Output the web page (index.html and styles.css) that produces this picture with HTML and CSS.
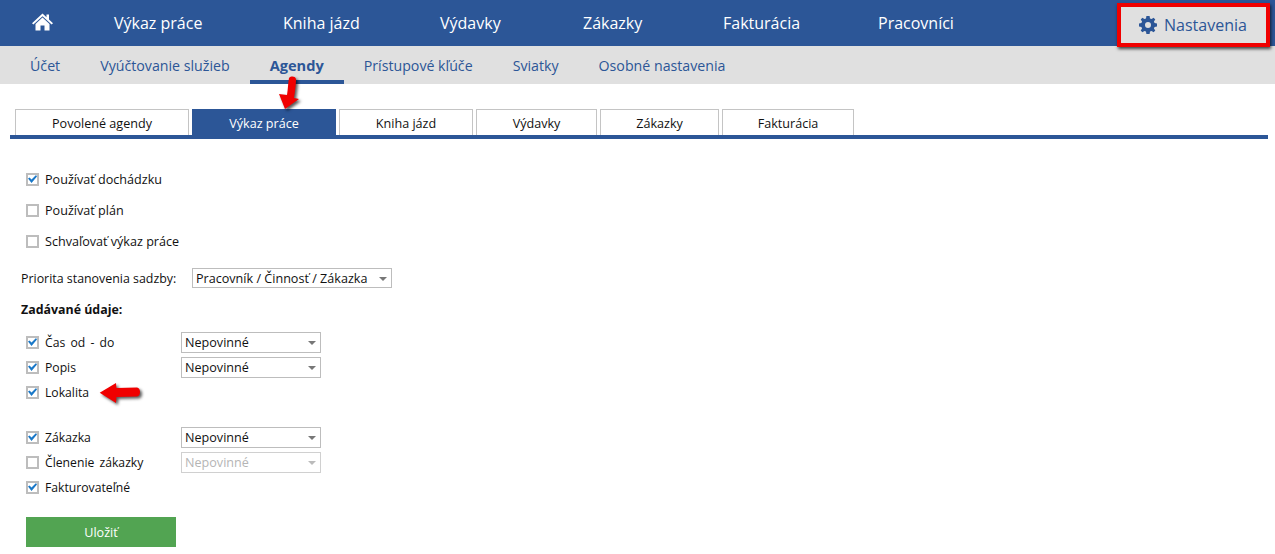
FILE: index.html
```
<!DOCTYPE html>
<html lang="sk">
<head>
<meta charset="utf-8">
<title>Nastavenia</title>
<link rel="stylesheet" href="styles.css">
</head>
<body>
<header class="topnav">
  <a class="home"><svg width="21" height="18" viewBox="0 0 21 18"><path fill="#fff" d="M10.5 0.5 L14.5 4.2 V1.6 H17 V6.5 L21 10.2 L19.6 11.6 L10.5 3.2 L1.4 11.6 L0 10.2 Z M3.5 11 L10.5 4.6 L17.5 11 V17.5 H12.5 V12.5 H8.5 V17.5 H3.5 Z"/></svg></a>
  <a class="topitem">Výkaz práce</a>
  <a class="topitem">Kniha jázd</a>
  <a class="topitem">Výdavky</a>
  <a class="topitem">Zákazky</a>
  <a class="topitem">Fakturácia</a>
  <a class="topitem">Pracovníci</a>
  <a class="settings"><svg width="18" height="18" viewBox="0 0 18 18"><path fill="#2c5697" fill-rule="evenodd" d="M7.4 0 H10.6 L11 2.4 L12.6 3.1 L14.6 1.7 L16.3 3.4 L14.9 5.4 L15.6 7 L18 7.4 V10.6 L15.6 11 L14.9 12.6 L16.3 14.6 L14.6 16.3 L12.6 14.9 L11 15.6 L10.6 18 H7.4 L7 15.6 L5.4 14.9 L3.4 16.3 L1.7 14.6 L3.1 12.6 L2.4 11 L0 10.6 V7.4 L2.4 7 L3.1 5.4 L1.7 3.4 L3.4 1.7 L5.4 3.1 L7 2.4 Z M9 6 A3 3 0 1 0 9 12 A3 3 0 1 0 9 6 Z"/></svg>Nastavenia</a>
</header>
<nav class="subnav">
  <a class="subitem">Účet</a>
  <a class="subitem">Vyúčtovanie služieb</a>
  <a class="subitem active">Agendy</a>
  <a class="subitem">Prístupové kľúče</a>
  <a class="subitem">Sviatky</a>
  <a class="subitem">Osobné nastavenia</a>
</nav>
<div class="tabs">
  <a class="tab">Povolené agendy</a>
  <a class="tab active">Výkaz práce</a>
  <a class="tab">Kniha jázd</a>
  <a class="tab">Výdavky</a>
  <a class="tab">Zákazky</a>
  <a class="tab">Fakturácia</a>
</div>
<main class="content">
  <div class="toggles">
    <label class="check"><span class="box on"></span>Používať dochádzku</label>
    <label class="check"><span class="box"></span>Používať plán</label>
    <label class="check"><span class="box"></span>Schvaľovať výkaz práce</label>
  </div>
  <div class="priority">
    <span class="prio-label">Priorita stanovenia sadzby:</span>
    <span class="select wide">Pracovník / Činnosť / Zákazka</span>
  </div>
  <h2 class="heading">Zadávané údaje:</h2>
  <div class="fields">
    <div class="field"><label class="check"><span class="box on"></span>Čas od - do</label><span class="select">Nepovinné</span></div>
    <div class="field"><label class="check"><span class="box on"></span>Popis</label><span class="select">Nepovinné</span></div>
    <div class="field"><label class="check"><span class="box on"></span>Lokalita</label></div>
  </div>
  <div class="fields second">
    <div class="field"><label class="check"><span class="box on"></span>Zákazka</label><span class="select">Nepovinné</span></div>
    <div class="field"><label class="check"><span class="box"></span>Členenie zákazky</label><span class="select disabled">Nepovinné</span></div>
    <div class="field"><label class="check"><span class="box on"></span>Fakturovateľné</label></div>
  </div>
  <button class="save">Uložiť</button>
</main>
<div class="highlight"></div>
<svg class="arrow arrow-down" width="40" height="40" viewBox="0 0 40 40"><path fill="#f00000" d="M19 6 C21 4 25 4 26 7 C26 12 25 20 24 26 L29 27 L15 37 L9 22 L17 23 C18 17 18 11 19 6 Z"/></svg>
<svg class="arrow arrow-left" width="55" height="30" viewBox="0 0 55 30"><path fill="#f00000" d="M4.7 14.7 L21 5 L21.5 10 L42 9.5 C46 10 46 18 42 18.5 L21.5 19 L21 25 Z"/></svg>
</body>
</html>
```
FILE: styles.css
```
* { box-sizing: border-box; }
html, body { margin: 0; padding: 0; }
body { font-family: "Open Sans", "Noto Sans", sans-serif; font-size: 12.6px; color: #111; background: #fff; width: 1275px; height: 554px; overflow: hidden; position: relative; }
.topnav { display: grid; grid-template-columns: 82px 169px 157px 143px 140px 155px auto; align-items: center; height: 46px; background: #2c5697; color: #fff; font-size: 16px; padding-left: 32px; }
.home { display: flex; margin-top: -2px; }
.topitem { white-space: nowrap; }
.settings { position: absolute; left: 1120px; top: 6px; width: 147px; height: 38px; background: #e0e0e0; color: #2c5697; display: flex; align-items: center; gap: 7px; padding-left: 19px; }
.subnav { display: flex; height: 38px; background: #e0e0e0; color: #2c5697; font-size: 14.2px; padding-left: 10px; }
.subitem { padding: 0 20px; line-height: 39px; white-space: nowrap; }
.subitem.active { font-size: 14.6px; font-weight: 700; border-bottom: 4px solid #2c5697; }
.tabs { display: grid; grid-template-columns: 174px 144px 134px 121px 119px 132px; gap: 3px; margin: 25px 7px 0 10px; padding-left: 5px; height: 30px; border-bottom: 4px solid #2c5697; }
.tab { height: 26px; line-height: 27px; text-align: center; border: 1px solid #c4c4c4; border-bottom: none; white-space: nowrap; }
.tab.active { background: #2c5697; border-color: #2c5697; color: #fff; }
.content { padding: 0 0 0 26px; }
.toggles { display: flex; flex-direction: column; gap: 11px; padding-top: 30px; }
.check { display: flex; align-items: center; height: 20px; white-space: nowrap; }
.box { width: 13px; height: 13px; border: 2px solid #bdbdbd; margin-right: 6px; flex: none; background: #fff; position: relative; }
.box.on::after { content: ""; position: absolute; inset: 0; background: #1a78c8; clip-path: polygon(0 45%, 17% 33%, 39% 56%, 89% 6%, 100% 22%, 39% 94%); }
.priority { display: flex; align-items: center; margin: 17px 0 0 -5px; height: 20px; }
.prio-label { width: 171px; font-size: 12.4px; }
.select { position: relative; display: block; width: 140px; height: 21px; line-height: 19px; border: 1px solid #bdbdbd; padding-left: 3px; background: #fff; white-space: nowrap; }
.select::after { content: ""; position: absolute; right: 4px; top: 8px; border: 4px solid transparent; border-top-color: #777; border-bottom: 0; }
.select.wide { width: 200px; height: 20px; }
.select.disabled { color: #b5b5b5; border-color: #d0d0d0; }
.select.disabled::after { border-top-color: #bbb; }
.heading { margin: 12px 0 0 -5px; font-size: 12.4px; font-weight: 700; line-height: 20px; }
.fields { margin-top: 12px; display: flex; flex-direction: column; gap: 5px; }
.fields.second { margin-top: 25px; }
.field { display: flex; align-items: center; height: 20px; }
.field .check { width: 155px; font-size: 12.2px; word-spacing: 2px; }
.save { display: block; width: 150px; height: 30px; margin-top: 20px; border: 0; background: #52a452; color: #fff; font: inherit; }
.highlight { position: absolute; left: 1117px; top: 3px; width: 153px; height: 44px; border: 4px solid #f00000; box-shadow: 1px 2px 3px rgba(0,0,0,.7); }
.arrow { position: absolute; filter: drop-shadow(2px 2px 1.5px rgba(0,0,0,.65)); }
.arrow-down { left: 270px; top: 72px; }
.arrow-left { left: 95px; top: 378px; }
```
